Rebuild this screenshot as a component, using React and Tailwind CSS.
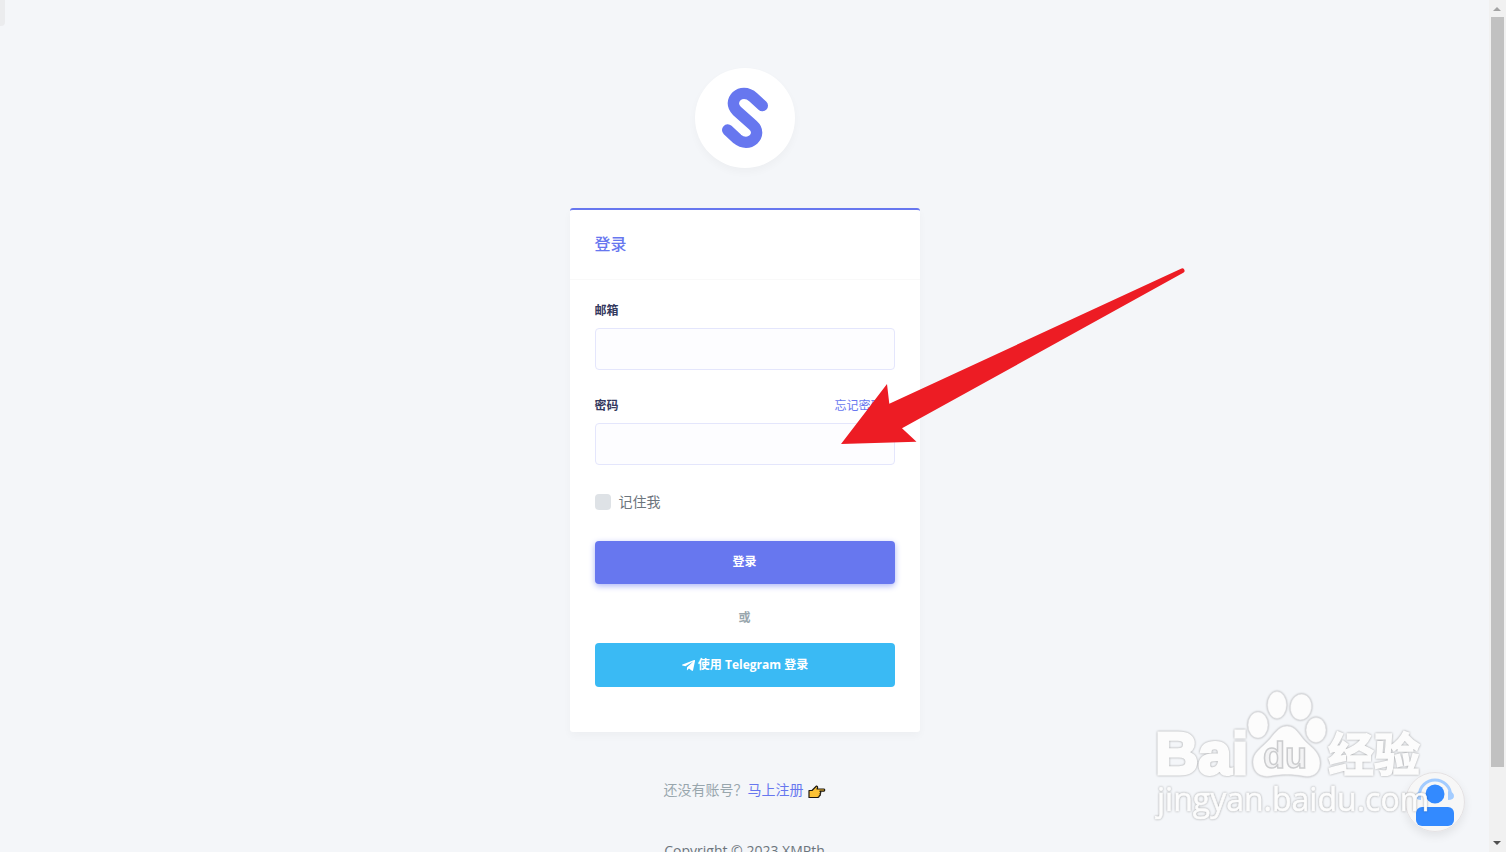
import React, { useState } from 'react';
import { FaTelegramPlane } from 'react-icons/fa';

const labelClass = 'text-xs leading-5 font-bold text-[#34395e]';
const inputClass =
  'block w-full h-[42px] px-4 text-sm rounded border border-[#e4e6fc] bg-[#fdfdff] text-[#495057] outline-none focus:border-[#95a0f4]';

const Logo = () => (
  <div className="w-[100px] h-[100px] rounded-full bg-white shadow-[0_4px_8px_rgba(0,0,0,0.03)]">
    <svg viewBox="75 54 300 300" className="w-full h-full" fill="none" aria-hidden="true">
      <path
        d="M277 167 L250 142 Q237 130 222 130 A32 32 0 0 0 190 160 Q190 172 201 183 L249 226 Q260 236 260 248 A32 30 0 0 1 228 277 Q214 277 202 267 L173 240"
        stroke="#6777ef"
        strokeWidth="34"
        strokeLinecap="round"
        strokeLinejoin="round"
      />
    </svg>
  </div>
);

const PointingHand = () => (
  <svg viewBox="0 0 18 15" className="inline-block w-[18px] h-[15px] ml-1 align-[-5px]" aria-hidden="true">
    <path
      d="M1 5.500 H4 L8.500 1 Q10.500 1.500 9 4 H16 Q17.500 5 16 6.200 H12 Q13.500 7.500 12 8.800 Q13 10 11.200 11 Q11.200 12.500 9 12.500 H1 Z"
      fill="#fcc236"
      stroke="#1b1710"
      strokeWidth="1.200"
      strokeLinejoin="round"
    />
  </svg>
);

const Arrow = () => (
  <svg
    viewBox="840 264 350 184"
    className="absolute left-[270px] top-[54px] w-[350px] h-[184px] pointer-events-none"
    aria-hidden="true"
  >
    <path
      d="M841 444 L887 384 L889.300 403.700 L1181 268.700 A2.300 2.300 0 0 1 1183.300 272.800 L902 428.300 L916.500 441.700 Z"
      fill="#ed1c24"
    />
  </svg>
);

const SupportIcon = () => (
  <svg viewBox="0 0 60 60" className="w-[60px] h-[60px]" aria-hidden="true">
    <circle cx="30" cy="30" r="29.500" fill="#f7f7f7" stroke="#dcd8da" strokeWidth="0.700" />
    <path d="M14.500 25 V23 A15.500 15 0 0 1 45.500 23 V25" fill="none" stroke="#a3ccff" strokeWidth="3" />
    <path d="M16 19 V28 Q11 28 11 24 Q11 20 16 19 Z M43 28 V19 Q49 20 49 24 Q49 28 43 28 Z" fill="#a3ccff" />
    <circle cx="30" cy="22" r="9.500" fill="#338aff" />
    <rect x="11" y="35" width="38" height="19" rx="6" fill="#338aff" />
  </svg>
);

const Watermark = () => (
  <svg
    viewBox="0 0 290 145"
    className="w-[290px] h-[145px] drop-shadow-[0_0_1px_rgba(0,0,0,0.35)]"
    aria-hidden="true"
  >
    <g fill="#fcfcfc" stroke="#e2e3e5" strokeWidth="0.600">
      <ellipse cx="108" cy="40" rx="10" ry="13" />
      <ellipse cx="127" cy="20" rx="9.500" ry="13.500" />
      <ellipse cx="151" cy="22" rx="10.500" ry="13" transform="rotate(8 151 22)" />
      <ellipse cx="166" cy="45" rx="10" ry="12.500" />
      <path d="M137 41 C146 41 149 50 156 57 C164 64 170 69 170 78 C170 88 163 93 153 91 C142 89 132 89 121 91 C110 93 103 87 103 77 C103 68 110 64 117 57 C124 50 128 41 137 41 Z" />
    </g>
    <g fill="#fcfcfc" stroke="#fcfcfc">
      <text x="5" y="89" strokeWidth="3" className="text-[60px] font-bold font-[family-name:'Liberation_Sans']">
        Bai
      </text>
      <text x="178" y="86" strokeWidth="1.500" className="text-[46px] font-bold font-[family-name:'Noto_Sans_CJK_SC']">
        经验
      </text>
      <text x="7" y="126" strokeWidth="0.600" className="text-[32px] font-[family-name:'Open_Sans']">
        jingyan.baidu.com
      </text>
    </g>
    <text
      x="113"
      y="83"
      fill="#f3f3f4"
      stroke="#cbccce"
      strokeWidth="1.500"
      className="text-[36px] font-bold font-[family-name:'Liberation_Sans']"
    >
      du
    </text>
  </svg>
);

const ScrollRail = () => (
  <div className="w-[17px] shrink-0 flex flex-col items-center bg-[#f1f1f1]" aria-hidden="true">
    <svg viewBox="0 0 17 17" className="w-[17px] h-[17px] shrink-0">
      <path d="M4 11 H12 L8 7 Z" fill="#a3a3a3" />
    </svg>
    <div className="w-[13px] h-[88%] bg-[#c1c1c1]" />
    <svg viewBox="0 0 17 17" className="w-[17px] h-[17px] shrink-0 mt-auto">
      <path d="M4 6 H12 L8 10 Z" fill="#505050" />
    </svg>
  </div>
);

const App = () => {
  const [remember, setRemember] = useState(false);

  return (
    <div className="relative flex h-screen overflow-hidden bg-[#f4f6f9] text-sm text-[#6c757d] font-['Open_Sans','Noto_Sans_CJK_SC',sans-serif]">
      <div className="absolute left-0 top-0 w-[5px] h-[26px] rounded-br bg-[#ebecee]" />

      <main className="flex-1 flex flex-col items-center pt-[68px]">
        <Logo />

        {/* Login card */}
        <div className="relative mt-10 w-full max-w-[350px] shrink-0 rounded-[3px] border-t-2 border-[#6777ef] bg-white shadow-[0_4px_8px_rgba(0,0,0,0.03)]">
          <div className="flex items-center h-[70px] px-[25px] pb-0.5 border-b border-[#f9f9f9]">
            <h4 className="text-base leading-7 font-medium text-[#6777ef]">登录</h4>
          </div>

          <form className="px-[25px] pt-[21px] pb-[45px]" onSubmit={(e) => e.preventDefault()}>
            <label htmlFor="email" className={`block mb-[7px] ${labelClass}`}>邮箱</label>
            <input id="email" type="email" className={inputClass} />

            <div className="flex justify-between mt-[26px] mb-[7px]">
              <label htmlFor="password" className={labelClass}>密码</label>
              <a href="#forgot" className="text-xs leading-5 text-[#6777ef]">忘记密码？</a>
            </div>
            <input id="password" type="password" className={inputClass} />

            <label className="flex items-center gap-2 mt-[25px] h-6 cursor-pointer">
              <input
                type="checkbox"
                checked={remember}
                onChange={(e) => setRemember(e.target.checked)}
                className="w-4 h-4 appearance-none rounded bg-[#dee2e6] checked:bg-[#6777ef]"
              />
              <span>记住我</span>
            </label>

            <button
              type="submit"
              className="w-full h-[43px] pb-0.5 mt-[27px] rounded text-xs font-bold text-white bg-[#6777ef] shadow-[0_2px_6px_#acb5f6]"
            >
              登录
            </button>

            <p className="mt-6 mb-4 text-center text-xs leading-[19px] font-bold text-[#98a6ad]">或</p>

            <button
              type="button"
              className="flex items-center justify-center gap-0.5 w-full h-[44px] rounded text-xs font-bold text-white bg-[#3abaf4]"
            >
              <FaTelegramPlane className="w-[15px] h-[15px]" />
              使用 Telegram 登录
            </button>
          </form>

          <Arrow />
        </div>

        <p className="mt-[46px] leading-6 text-[#98a6ad]">
          还没有账号？<a href="#register" className="text-[#6777ef]">马上注册</a>
          <PointingHand />
        </p>
        <footer className="mt-[37px] leading-6">Copyright © 2023 XMPth</footer>
      </main>

      <ScrollRail />

      {/* Support button */}
      <button
        type="button"
        aria-label="在线客服"
        className="absolute right-[41px] bottom-5 rounded-full shadow-[0_4px_10px_rgba(0,0,0,0.08)]"
      >
        <SupportIcon />
      </button>

      <div className="absolute right-[66px] bottom-[22px] pointer-events-none">
        <Watermark />
      </div>
    </div>
  );
};

export default App;
